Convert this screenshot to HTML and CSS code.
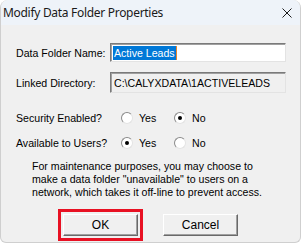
FILE: index.html
```html
<!DOCTYPE html>
<html lang="en">
<head>
    <meta charset="UTF-8">
    <title>Modify Data Folder Properties</title>
    <link rel="stylesheet" href="styles.css">
</head>
<body>
    <div class="window">
        <div class="titlebar">
            <span class="title">Modify Data Folder Properties</span>
            <svg class="close" viewBox="0 0 10 10" width="10" height="10">
                <path d="M0.5 0.5 L9.5 9.5 M9.5 0.5 L0.5 9.5" stroke="#1b1b1b" stroke-width="1" fill="none"/>
            </svg>
        </div>

        <div class="dialog-body">
            <div class="field-row">
                <span class="label">Data Folder Name:</span>
                <div class="textbox">
                    <span class="selected">Active Leads</span><span class="caret"></span>
                </div>
            </div>

            <div class="field-row linked">
                <span class="label">Linked Directory:</span>
                <div class="textbox readonly">C:\CALYXDATA\1ACTIVELEADS</div>
            </div>

            <div class="option-row">
                <span class="label">Security Enabled?</span>
                <span class="option"><span class="radio"></span>Yes</span>
                <span class="option"><span class="radio checked"></span>No</span>
            </div>

            <div class="option-row">
                <span class="label">Available to Users?</span>
                <span class="option"><span class="radio checked"></span>Yes</span>
                <span class="option"><span class="radio"></span>No</span>
            </div>

            <p class="note">For maintenance purposes, you may choose to<br>make a data folder "unavailable" to users on a<br>network, which takes it off-line to prevent access.</p>

            <div class="buttons">
                <div class="marker">
                    <button class="btn">OK</button>
                </div>
                <button class="btn">Cancel</button>
            </div>
        </div>
    </div>
</body>
</html>
```

FILE: styles.css
```css
* {
    margin: 0;
    padding: 0;
    box-sizing: border-box;
}

body {
    background: #ffffff;
    font-family: 'Liberation Sans', Arial, sans-serif;
    font-size: 10.6px;
    color: #000;
}

.window {
    width: 301px;
    height: 243px;
    background: #f0f0f0;
    border: 1px solid #cfcfcf;
    border-top: none;
    border-radius: 8px 8px 6px 6px;
    overflow: hidden;
}

.titlebar {
    height: 25px;
    background: #eef3f9;
    display: flex;
    align-items: center;
    justify-content: space-between;
    padding: 0 8px 0 2px;
}

.title {
    font-family: 'Noto Sans', 'Open Sans', sans-serif;
    font-size: 12px;
    color: #1a1a1a;
    letter-spacing: -0.3px;
}

.close {
    display: block;
    margin-top: 1px;
}

.dialog-body {
    padding: 18px 0 0 15px;
}

.field-row {
    display: flex;
    align-items: center;
}

.field-row.linked {
    margin-top: 10px;
}

.label {
    width: 94px;
    flex-shrink: 0;
}

.textbox {
    width: 176px;
    height: 19px;
    background: #ffffff;
    border: 1px solid;
    border-color: #7a7a7a #e3e3e3 #e3e3e3 #7a7a7a;
    box-shadow: inset 1px 1px 0 #a0a0a0;
    display: flex;
    align-items: center;
    padding-left: 2px;
}

.selected {
    background: #0078d7;
    color: #ffffff;
    line-height: 14px;
    padding: 0 1px;
}

.caret {
    width: 1px;
    height: 14px;
    background: #e8842c;
}

.textbox.readonly {
    height: 21px;
    background: #f0f0f0;
    padding-left: 3px;
}

.option-row {
    display: flex;
    align-items: center;
    height: 17px;
    margin-top: 16px;
}

.option-row + .option-row {
    margin-top: 8px;
}

.option-row .label {
    width: 105px;
}

.option {
    display: flex;
    align-items: center;
    width: 53px;
}

.radio {
    width: 12px;
    height: 12px;
    border-radius: 50%;
    background: #ffffff;
    border: 1px solid;
    border-color: #8a8a8a #e3e3e3 #e3e3e3 #8a8a8a;
    margin-right: 6px;
    position: relative;
}

.radio.checked::after {
    content: '';
    position: absolute;
    width: 4px;
    height: 4px;
    border-radius: 50%;
    background: #000;
    top: 3px;
    left: 3px;
}

.note {
    margin: 9px 0 0 16px;
    line-height: 13px;
}

.buttons {
    display: flex;
    align-items: center;
    margin-top: 10px;
    margin-left: 42px;
    gap: 20px;
}

.marker {
    border: 3px solid #e81123;
    padding: 2px;
}

.btn {
    width: 75px;
    height: 22px;
    background: #f0f0f0;
    border: 1px solid;
    border-color: #ffffff #696969 #696969 #ffffff;
    box-shadow: inset -1px -1px 0 #a0a0a0;
    font-family: 'Liberation Sans', Arial, sans-serif;
    font-size: 12px;
    color: #000;
}
```
